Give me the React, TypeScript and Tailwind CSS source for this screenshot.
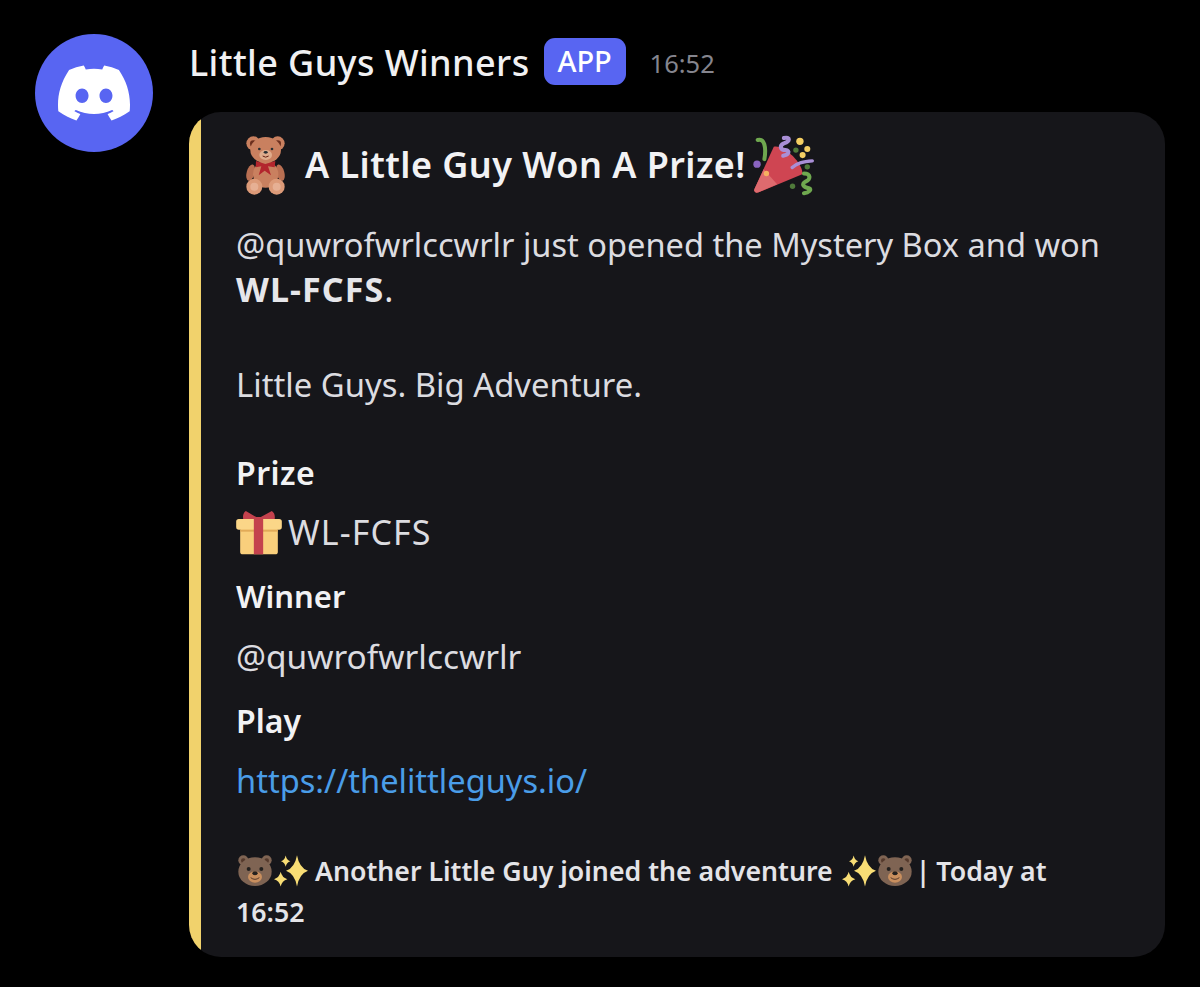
import { SiDiscord } from 'react-icons/si'

const font = { fontFamily: '"Noto Sans", "Open Sans", sans-serif' }

function Teddy() {
  return (
    <svg viewBox="48 45 117 177" className="h-[59px] w-[39px] shrink-0">
      <circle cx="70" cy="67" r="21" fill="#c9805f" />
      <circle cx="143" cy="67" r="21" fill="#c9805f" />
      <circle cx="70" cy="68" r="10" fill="#6b2f1e" />
      <circle cx="143" cy="68" r="10" fill="#6b2f1e" />
      <ellipse cx="62" cy="155" rx="12" ry="25" fill="#b96f52" transform="rotate(15 62 155)" />
      <ellipse cx="151" cy="155" rx="12" ry="25" fill="#b96f52" transform="rotate(-15 151 155)" />
      <ellipse cx="107" cy="160" rx="38" ry="40" fill="#c9805f" />
      <ellipse cx="107" cy="87" rx="46" ry="39" fill="#c9805f" />
      <ellipse cx="107" cy="102" rx="19" ry="15" fill="#e0ac8c" />
      <circle cx="88" cy="84" r="4" fill="#292f33" />
      <circle cx="126" cy="84" r="4" fill="#292f33" />
      <ellipse cx="107" cy="94" rx="6" ry="4" fill="#292f33" />
      <path d="M98 105q9 7 18 0" fill="none" stroke="#662113" strokeWidth="3" />
      <path d="M78 120l28 9 30-9-2 19-20-3 9 27-19-14-18 14 8-27-17 3z" fill="#b3262d" />
      <circle cx="73" cy="197" r="24" fill="#dc9a78" />
      <circle cx="140" cy="197" r="24" fill="#dc9a78" />
      <circle cx="73" cy="197" r="12" fill="#e6b094" />
      <circle cx="140" cy="197" r="12" fill="#e6b094" />
    </svg>
  )
}

function Popper() {
  return (
    <svg viewBox="35 30 185 185" className="h-[62px] w-[62px] shrink-0">
      <path d="M100 68L42 195Q40 208 55 204L185 150C190 120 130 60 100 68z" fill="#cf4552" />
      <path d="M70 135L42 195Q40 208 55 204L110 180z" fill="#de6a6e" />
      <path d="M72 105C78 70 72 42 52 48" fill="none" stroke="#6fa84f" strokeWidth="12" strokeLinecap="round" />
      <path d="M130 42C150 37 150 52 130 58C115 65 120 78 135 78C150 80 145 92 128 95" fill="none" stroke="#a98fd6" strokeWidth="12" strokeLinecap="round" />
      <path d="M155 130C170 115 190 112 215 110" fill="none" stroke="#a98fd6" strokeWidth="10" strokeLinecap="round" />
      <path d="M190 148C210 148 212 165 195 172C180 180 190 190 205 192C215 195 205 205 190 207" fill="none" stroke="#6fa84f" strokeWidth="12" strokeLinecap="round" />
      <circle cx="178" cy="52" r="11" fill="#f5cf63" />
      <circle cx="200" cy="75" r="9" fill="#f5cf63" />
      <circle cx="186" cy="93" r="9" fill="#f5cf63" />
      <circle cx="166" cy="78" r="8" fill="#4f7a3a" />
      <circle cx="200" cy="128" r="8" fill="#4f7a3a" />
      <circle cx="156" cy="186" r="8" fill="#4f7a3a" />
      <circle cx="50" cy="120" r="11" fill="#8a64c0" />
      <circle cx="78" cy="148" r="8" fill="#f5b060" />
    </svg>
  )
}

function Gift() {
  return (
    <svg viewBox="33 28 137 132" className="h-[44px] w-[46px] shrink-0">
      <path d="M62 28L100 50L140 28Q152 36 148 56H55Q50 36 62 28z" fill="#c4424d" />
      <rect x="45" y="80" width="113" height="78" rx="8" fill="#f9cf7c" />
      <rect x="33" y="52" width="137" height="32" rx="8" fill="#fbd688" />
      <rect x="45" y="84" width="113" height="6" fill="#e2ab58" />
      <rect x="86" y="46" width="28" height="112" fill="#c4424d" />
    </svg>
  )
}

function Bear() {
  return (
    <svg viewBox="0 0 102 93" className="h-[31px] w-[34px] shrink-0">
      <circle cx="16" cy="16" r="15" fill="#7f6453" />
      <circle cx="86" cy="16" r="15" fill="#7f6453" />
      <circle cx="16" cy="17" r="7" fill="#54392c" />
      <circle cx="86" cy="17" r="7" fill="#54392c" />
      <ellipse cx="51" cy="50" rx="50" ry="43" fill="#7f6453" />
      <circle cx="32" cy="42" r="6" fill="#24211f" />
      <circle cx="70" cy="42" r="6" fill="#24211f" />
      <ellipse cx="51" cy="66" rx="21" ry="17" fill="#c98f5e" />
      <ellipse cx="51" cy="55" rx="8" ry="6" fill="#24211f" />
      <path d="M38 68q13 10 26 0" fill="none" stroke="#54392c" strokeWidth="3" />
    </svg>
  )
}

function Star({ x, y, rx, ry }: { x: number; y: number; rx: number; ry: number }) {
  const kx = rx * 0.2
  const ky = ry * 0.2
  return (
    <path
      d={`M${x} ${y - ry}Q${x + kx} ${y - ky} ${x + rx} ${y}Q${x + kx} ${y + ky} ${x} ${y + ry}Q${x - kx} ${y + ky} ${x - rx} ${y}Q${x - kx} ${y - ky} ${x} ${y - ry}z`}
      fill="#f8dd75"
    />
  )
}

function Sparkles() {
  return (
    <svg viewBox="0 0 102 95" className="h-[32px] w-[34px] shrink-0">
      <Star x={69} y={47} rx={33} ry={47} />
      <Star x={20} y={72} rx={20} ry={22} />
      <Star x={35} y={18} rx={14} ry={17} />
    </svg>
  )
}

export default function App() {
  return (
    <div className="flex h-[987px] w-[1200px] gap-[36px] overflow-hidden bg-black pl-[35px] pt-[34px]" style={font}>
      <div className="flex h-[118px] w-[118px] shrink-0 items-center justify-center rounded-full bg-[#5865f2]">
        <SiDiscord className="h-[72px] w-[72px] text-white" />
      </div>

      <div className="flex flex-col">
        <div className="flex h-[58px] items-center">
          <span className="text-[36px] font-medium leading-[44px] tracking-[0.4px] text-[#f0f0f2]">Little Guys Winners</span>
          <span className="mb-[4px] ml-[14px] flex h-[47px] w-[82px] items-center justify-center rounded-[11px] bg-[#5865f2] text-[29px] font-medium text-white">
            APP
          </span>
          <span className="ml-[24px] text-[25.5px] text-[#85858e]">16:52</span>
        </div>

        <div className="mt-[20px] flex h-[845px] w-[976px] overflow-hidden rounded-[32px] bg-[#16161a]">
          <div className="w-[12px] shrink-0 bg-[#f1d26c]" />
          <div className="flex-1 pl-[35px] pt-[18px] text-[#dcdce0]">
            <div className="flex h-[70px] items-center">
              <span className="ml-[10px] flex"><Teddy /></span>
              <span className="ml-[20px] text-[36px] font-semibold tracking-[0.45px] text-[#f2f2f4]">A Little Guy Won A Prize!</span>
              <span className="ml-[6px] flex"><Popper /></span>
            </div>
            <div className="mt-[22px] leading-[45px]">
              <p className="text-[32.6px]">@quwrofwrlccwrlr just opened the Mystery Box and won</p>
              <p className="text-[34px] font-bold tracking-[1.1px] text-[#e6e6ea]">
                WL-FCFS<span className="font-normal">.</span>
              </p>
              <p className="mt-[50px] text-[32.8px]">Little Guys. Big Adventure.</p>
            </div>
            <p className="mt-[43px] text-[32px] font-semibold leading-[45px] tracking-[0.45px] text-[#f2f2f4]">Prize</p>
            <div className="mt-[15px] flex h-[45px] items-center gap-[6px] text-[34px] tracking-[1.1px]">
              <Gift />
              <span>WL-FCFS</span>
            </div>
            <p className="mt-[19px] text-[31px] font-semibold leading-[45px] text-[#f2f2f4]">Winner</p>
            <p className="mt-[15px] text-[33.4px] leading-[45px]">@quwrofwrlccwrlr</p>
            <p className="mt-[19px] text-[32px] font-semibold leading-[45px] text-[#f2f2f4]">Play</p>
            <p className="mt-[15px] text-[32.6px] leading-[45px] text-[#4a9de8]">https://thelittleguys.io/</p>
            <div className="mt-[47px] flex h-[41px] items-center text-[26.7px] font-semibold leading-[41px] text-[#e4e4e8]">
              <span className="ml-[2px] flex"><Bear /></span>
              <span className="ml-[2px] flex"><Sparkles /></span>
              <span className="ml-[7px]">Another Little Guy joined the adventure</span>
              <span className="ml-[9px] flex"><Sparkles /></span>
              <span className="ml-[2px] flex"><Bear /></span>
              <span className="ml-[4px]">|</span>
              <span className="ml-[6px]">Today at</span>
            </div>
            <p className="text-[26.7px] font-semibold leading-[41px] text-[#e4e4e8]">16:52</p>
          </div>
        </div>
      </div>
    </div>
  )
}
